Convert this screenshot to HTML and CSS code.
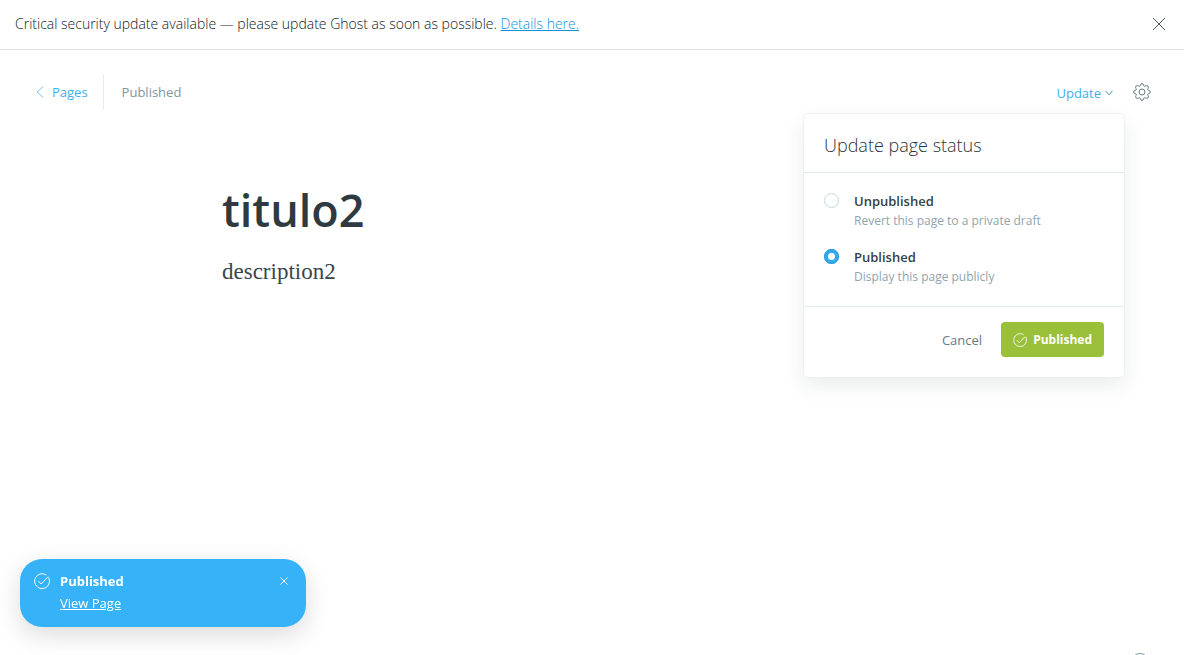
FILE: index.html
```html
<!DOCTYPE html>
<html lang="en">
<head>
  <meta charset="utf-8">
  <meta name="viewport" content="width=device-width, initial-scale=1">
  <title>titulo2 - Ghost</title>
  <link rel="stylesheet" href="styles.css">
</head>
<body>
  <aside class="alert">
    <p class="alert-text">Critical security update available — please update Ghost as soon as possible. <a class="alert-link" href="#details">Details here.</a></p>
    <button class="icon-button alert-close" type="button" aria-label="Dismiss">
      <svg width="14" height="14" viewBox="0 0 14 14"><path d="M1 1l12 12M13 1L1 13"/></svg>
    </button>
  </aside>

  <header class="editor-header">
    <nav class="breadcrumb">
      <a class="back-link" href="#pages">
        <svg width="8" height="12" viewBox="0 0 8 12"><path d="M7.500.5L1 6l6.500 5.500"/></svg>
        Pages
      </a>
      <span class="post-status">Published</span>
    </nav>
    <div class="actions">
      <div class="publish-menu">
        <button class="publish-trigger" type="button" aria-expanded="true">
          Update
          <svg width="8" height="6" viewBox="0 0 8 6"><path d="M.5.800L4 4.800 7.500.800"/></svg>
        </button>
        <form class="dropdown">
          <h2 class="dropdown-title">Update page status</h2>
          <div class="options">
            <div class="option">
              <input class="radio" type="radio" name="status" id="unpublished">
              <label class="option-label" for="unpublished">Unpublished
                <span class="option-hint">Revert this page to a private draft</span>
              </label>
            </div>
            <div class="option">
              <input class="radio" type="radio" name="status" id="published" checked>
              <label class="option-label" for="published">Published
                <span class="option-hint">Display this page publicly</span>
              </label>
            </div>
          </div>
          <footer class="dropdown-footer">
            <button class="cancel" type="button">Cancel</button>
            <button class="submit" type="button">
              <svg width="14" height="14" viewBox="0 0 16 16"><path d="M14.600 4.700A7.300 7.300 0 1 1 12.300 2.100M4.500 8.300l2.700 2.700 6.600-7"/></svg>
              Published
            </button>
          </footer>
        </form>
      </div>
      <button class="icon-button settings" type="button" aria-label="Settings">
        <svg width="18" height="18" viewBox="0 0 18 18"><circle cx="9" cy="9" r="3"/><path d="M7.500 2.200Q7.700.6 9 .6T10.500 2.200Q11 3.900 12.600 3Q14 2 14.900 3T15 5.400Q14.100 7 15.800 7.500Q17.400 7.700 17.400 9T15.800 10.500Q14.100 11 15 12.600Q16 14 14.900 14.900T12.600 15Q11 14.100 10.500 15.800Q10.300 17.400 9 17.400T7.500 15.800Q7 14.100 5.400 15Q4 16 3.100 14.900T3 12.600Q3.900 11 2.200 10.500Q.6 10.300.6 9T2.200 7.500Q3.900 7 3 5.400Q2 4 3.100 3T5.400 3Q7 3.900 7.500 2.200Z"/></svg>
      </button>
    </div>
  </header>

  <main class="editor">
    <h1 class="editor-title">titulo2</h1>
    <p class="editor-body">description2</p>
  </main>

  <section class="toast" role="status">
    <svg class="toast-icon" width="16" height="16" viewBox="0 0 16 16"><path d="M14.600 4.700A7.400 7.400 0 1 1 12.300 2.100M4.500 8.300l2.700 2.700 7-7.400"/></svg>
    <div class="toast-content">
      <strong class="toast-title">Published</strong>
      <a class="toast-link" href="#view">View Page</a>
    </div>
    <button class="icon-button toast-close" type="button" aria-label="Close">
      <svg width="8" height="8" viewBox="0 0 8 8"><path d="M.5.5l7 7M7.500.5l-7 7"/></svg>
    </button>
  </section>

  <button class="icon-button help" type="button" aria-label="Help">
    <svg width="18" height="18" viewBox="0 0 18 18"><circle cx="9" cy="9" r="8.500"/></svg>
  </button>
</body>
</html>
```

FILE: styles.css
```css
* {
  box-sizing: border-box;
}

body {
  margin: 0;
  min-height: 100vh;
  overflow: hidden;
  background: #fff;
  color: #394047;
  font: 400 13px/20px "Open Sans", "Noto Sans", sans-serif;
}

button {
  padding: 0;
  border: 0;
  background: none;
  color: inherit;
  font: inherit;
  cursor: pointer;
}

svg {
  display: block;
  flex: none;
  fill: none;
  stroke: currentColor;
}

h1,
h2,
p {
  margin: 0;
}

.icon-button {
  display: flex;
}

.alert {
  display: flex;
  align-items: center;
  justify-content: space-between;
  padding: 14px 18px 15px 15px;
  border-bottom: 1px solid #dfe1e3;
  color: #10191d;
}

.alert-text {
  font-size: 14px;
  font-weight: 300;
}

.alert-link {
  color: #1292dd;
}

.alert-close {
  color: #4b565b;
}

.editor-header {
  display: flex;
  align-items: center;
  justify-content: space-between;
  padding: 24px 33px 0 36px;
}

.breadcrumb {
  display: flex;
  align-items: center;
}

.back-link {
  display: flex;
  align-items: center;
  gap: 8px;
  padding: 8px 15px 8px 0;
  border-right: 1px solid #e3ebf2;
  color: #3eb0ef;
  text-decoration: none;
}

.back-link svg {
  color: #7cc8f3;
}

.post-status {
  padding-left: 18px;
  color: #7f959e;
}

.actions {
  display: flex;
  align-items: center;
  gap: 20px;
}

.publish-menu {
  position: relative;
}

.publish-trigger {
  display: flex;
  align-items: center;
  gap: 4px;
  padding-top: 2px;
  color: #3eb0ef;
}

.publish-trigger svg {
  color: #4c95bd;
}

.settings {
  color: #667b86;
}

.dropdown {
  position: absolute;
  top: calc(100% + 10px);
  right: -12px;
  width: 322px;
  border: 1px solid #edf1f3;
  border-radius: 5px;
  background: #fff;
  box-shadow: 0 8px 20px rgba(30, 50, 60, 0.09);
}

.dropdown-title {
  padding: 19px 20px 15px;
  border-bottom: 1px solid #e3ebf2;
  color: #2b353a;
  font-size: 18px;
  font-weight: 300;
  line-height: 24px;
}

.options {
  display: grid;
  gap: 16px;
  padding: 18px 20px 19px;
}

.option {
  display: flex;
  gap: 15px;
}

.radio {
  flex: none;
  width: 15px;
  height: 15px;
  margin: 2px 0 0;
  border: 1px solid #c5d9e8;
  border-radius: 50%;
  background: #fff;
  appearance: none;
}

.radio:checked {
  border: 4px solid #35a9ee;
  outline: 1px solid #2c9cdf;
  outline-offset: -1px;
}

.option-label {
  color: #343f44;
  font-weight: 600;
}

.option-hint {
  display: block;
  color: #91a4ad;
  font-size: 12px;
  font-weight: 400;
}

.dropdown-footer {
  display: flex;
  align-items: center;
  justify-content: flex-end;
  gap: 19px;
  padding: 15px 20px 20px;
  border-top: 1px solid #e3ebf2;
}

.cancel {
  color: #667b86;
}

.submit {
  display: flex;
  align-items: center;
  gap: 6px;
  height: 35px;
  padding: 0 12px;
  border-radius: 4px;
  background: #9ac03a;
  color: #fff;
  font-size: 12px;
  font-weight: 700;
}

.editor {
  max-width: 780px;
  margin: 0 auto;
  padding: 70px 20px;
}

.editor-title {
  color: #2e3a3f;
  font-size: 45px;
  font-weight: 600;
  line-height: 60px;
}

.editor-body {
  padding-top: 16px;
  color: #3a464c;
  font-family: "Liberation Serif", serif;
  font-size: 23px;
  line-height: 32px;
}

.toast {
  position: fixed;
  bottom: 28px;
  left: 20px;
  display: flex;
  align-items: flex-start;
  gap: 10px;
  width: 286px;
  padding: 12px 18px 14px 14px;
  border-radius: 22px;
  background: #35b2f8;
  box-shadow: 0 8px 26px rgba(0, 0, 0, 0.14);
  color: #fff;
}

.toast-icon {
  margin-top: 2px;
}

.toast-content {
  display: grid;
  flex: 1;
  gap: 2px;
}

.toast-link {
  color: #fff;
}

.toast-close {
  margin-top: 6px;
}

.help {
  position: fixed;
  right: 35px;
  bottom: -16px;
  color: #7f959e;
}
```
